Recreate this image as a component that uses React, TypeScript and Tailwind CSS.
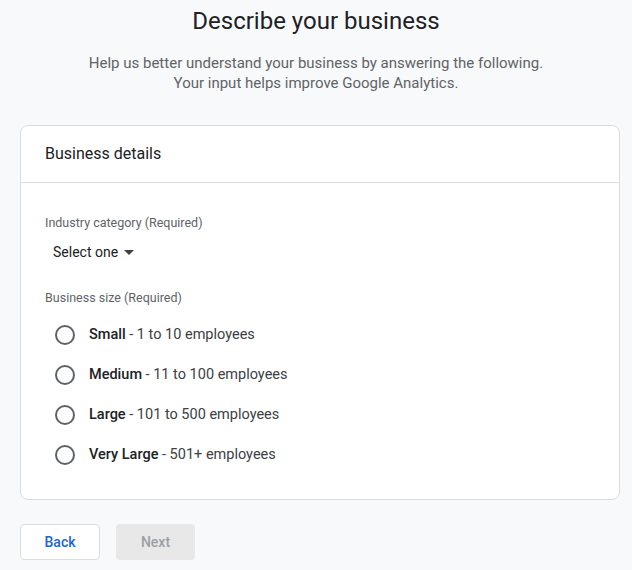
import React from "react";

const sizes = [
  { id: "small", label: "Small", detail: "1 to 10 employees" },
  { id: "medium", label: "Medium", detail: "11 to 100 employees" },
  { id: "large", label: "Large", detail: "101 to 500 employees" },
  { id: "xlarge", label: "Very Large", detail: "501+ employees" },
];

export default function App() {
  return (
    <div className="min-h-[570px] w-[632px] bg-[#f8f9fa] font-['Roboto',sans-serif] text-[#202124]">
      {/* Heading */}
      <div className="flex flex-col items-center pt-[5px]">
        <h1 className="text-[24px] leading-[32px] text-[#202124]">Describe your business</h1>
        <p className="mt-[16px] text-center text-[15px] leading-[20px] text-[#5f6368]">
          Help us better understand your business by answering the following.
          <br />
          Your input helps improve Google Analytics.
        </p>
      </div>

      {/* Card */}
      <div className="mx-[20px] mt-[32px] w-[600px] rounded-[8px] border border-[#dadce0] bg-white">
        <div className="flex h-[57px] items-center border-b border-[#dadce0] px-[24px]">
          <span className="text-[16px] text-[#202124]">Business details</span>
        </div>

        <div className="px-[24px] pb-[24px] pt-[32px]">
          <div className="text-[12.5px] leading-[16px] text-[#5f6368]">Industry category (Required)</div>
          <button className="mt-[7px] flex h-[28px] items-center gap-[6px] px-[8px] text-[14px] text-[#202124]">
            Select one
            <svg width="10" height="5" viewBox="0 0 10 5" className="mt-[1px]">
              <path d="M0 0l5 5 5-5z" fill="#3c4043" />
            </svg>
          </button>

          <div className="mt-[24px] text-[12.5px] leading-[16px] text-[#5f6368]">Business size (Required)</div>
          <div className="mt-[9px] flex flex-col">
            {sizes.map((s) => (
              <label key={s.id} className="flex h-[40px] items-center">
                <span className="ml-[10px] h-[20px] w-[20px] rounded-full border-2 border-[#5f6368]" />
                <span className="ml-[14px] text-[14.5px] text-[#3c4043]">
                  <span className="font-medium text-[#202124]">{s.label}</span> - {s.detail}
                </span>
              </label>
            ))}
          </div>
        </div>
      </div>

      {/* Buttons */}
      <div className="mt-[24px] flex gap-[16px] px-[20px]">
        <button className="h-[36px] w-[80px] rounded-[4px] border border-[#dadce0] bg-white text-[14px] font-medium text-[#1a67d2]">
          Back
        </button>
        <button className="h-[36px] w-[79px] rounded-[4px] bg-[#e8e8e8] text-[14px] font-medium text-[#9aa0a6]">
          Next
        </button>
      </div>
    </div>
  );
}
